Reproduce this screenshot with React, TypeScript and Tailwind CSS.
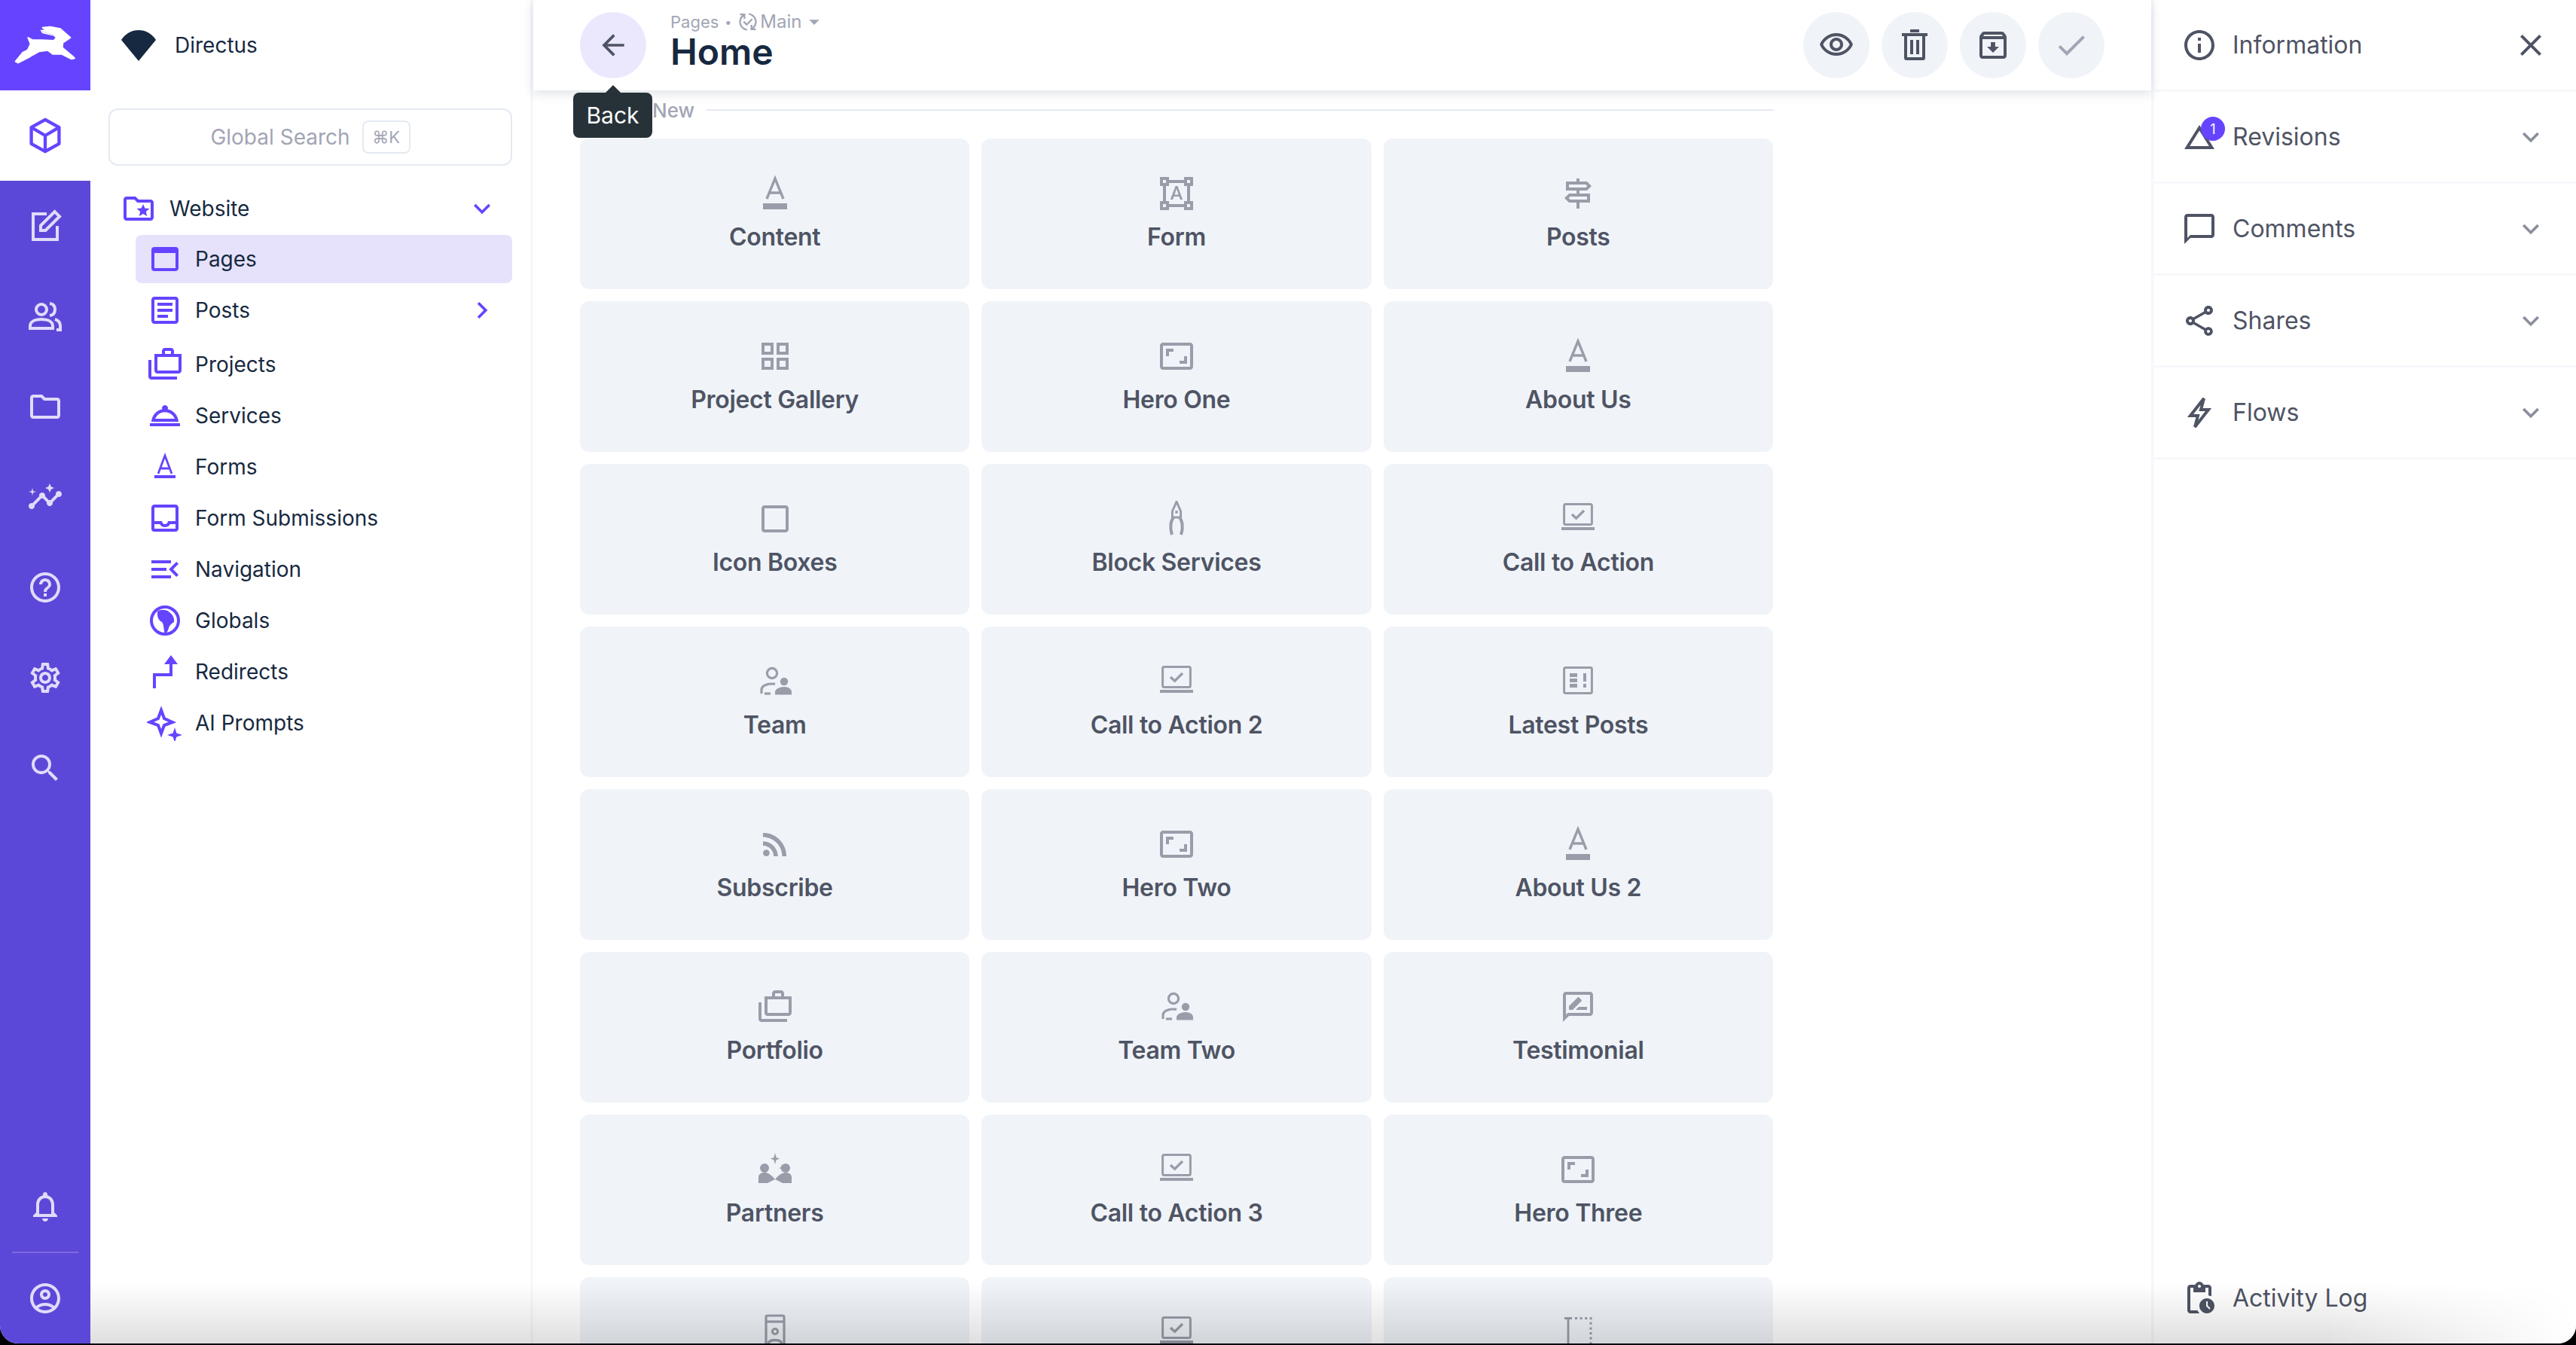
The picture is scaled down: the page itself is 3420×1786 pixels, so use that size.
import {
  MdArrowBack,
  MdArrowDropDown,
  MdCheck,
  MdClose,
  MdExpandMore,
  MdChevronRight,
  MdSearch,
  MdOutlineAccountCircle,
  MdOutlineArchive,
  MdOutlineArticle,
  MdOutlineAspectRatio,
  MdOutlineCases,
  MdOutlineChangeHistory,
  MdOutlineChatBubbleOutline,
  MdOutlineCheckBoxOutlineBlank,
  MdOutlineFolder,
  MdOutlineFolderSpecial,
  MdOutlineFormatShapes,
  MdOutlineGridView,
  MdOutlineHelpOutline,
  MdOutlineInbox,
  MdOutlineInfo,
  MdOutlineInsights,
  MdOutlineMenuOpen,
  MdOutlineNotifications,
  MdOutlinePendingActions,
  MdOutlinePublishedWithChanges,
  MdOutlineRateReview,
  MdOutlineRoomService,
  MdOutlineRssFeed,
  MdOutlineSettings,
  MdOutlineShare,
  MdOutlineSignpost,
  MdOutlineVisibility,
  MdOutlineWebAsset,
} from 'react-icons/md';
import type { ComponentType } from 'react';

type IconType = ComponentType<{ className?: string }>;
type IconProps = { className?: string };

const font = { fontFamily: 'Inter, "Liberation Sans", sans-serif' };

// Hand-drawn icons that the packages don't carry
const CubeIcon = ({ className }: IconProps) => (
  <svg viewBox="0 0 24 24" className={className} fill="none" stroke="currentColor" strokeWidth="2" strokeLinejoin="round">
    <path d="M12 2.200 20.500 7v10L12 21.800 3.500 17V7z" />
    <path d="M3.500 7 12 12l8.500-5M12 12v9.800" />
  </svg>
);

const EditSquareIcon = ({ className }: IconProps) => (
  <svg viewBox="0 0 24 24" className={className} fill="none" stroke="currentColor" strokeWidth="2">
    <path d="M13 4H4v17h16v-9" />
    <path d="M9 15v-3.200L18.300 2.500l3.200 3.200L12.200 15z" />
  </svg>
);

const GroupIcon = ({ className }: IconProps) => (
  <svg viewBox="0 0 24 24" className={className} fill="none" stroke="currentColor" strokeWidth="2">
    <circle cx="9.500" cy="7.500" r="3.500" />
    <path d="M2 20v-1.500c0-3 3.200-4.500 7.500-4.500s7.500 1.500 7.500 4.500V20z" />
    <path d="M15 3.500c2.700.300 3.500 2.300 3.500 4s-.800 3.700-3.500 4" />
    <path d="M18.500 14c2.300.700 3.500 2.200 3.500 4.500V21h-2.500" />
  </svg>
);

const RedirectIcon = ({ className }: IconProps) => (
  <svg viewBox="0 0 24 24" className={className} fill="none">
    <path d="M5 23v-9h11V5" stroke="currentColor" strokeWidth="2" />
    <path d="M11.500 7 16 1l4.500 6z" fill="currentColor" />
  </svg>
);

const SparkIcon = ({ className }: IconProps) => (
  <svg viewBox="0 0 24 24" className={className} fill="none">
    <path d="M9.500 3.500 11.500 9l5.500 2.500-5.500 2L9.500 19l-2-5.500L2 11.500 7.500 9z" stroke="currentColor" strokeWidth="2" />
    <path d="M18.500 15l1.200 3.800 3.800 1.200-3.800 1.200-1.200 3.800-1.200-3.800-3.800-1.200 3.800-1.200z" fill="currentColor" />
  </svg>
);

const GlobeIcon = ({ className }: IconProps) => (
  <svg viewBox="0 0 24 24" className={className} fill="none">
    <circle cx="12" cy="12" r="9" stroke="currentColor" strokeWidth="2" />
    <path d="M7 6c2-1.500 6-1.500 8 .500 2 1.500 3.500 4 3 6.500-1.500 1-3 2-3.500 4-.500 2-1.500 3.500-2.500 4-1-3-.500-6-2-8-2-1-3-3-3-5z" fill="currentColor" />
  </svg>
);

const NavTextIcon = ({ className }: IconProps) => (
  <svg viewBox="0 0 24 24" className={className} fill="none">
    <path d="M7.500 16.500 12 4.500l4.500 12M9 13h6" stroke="currentColor" strokeWidth="1.400" />
    <path d="M5 17.500h14v2H5z" fill="currentColor" />
  </svg>
);

const TextIcon = ({ className }: IconProps) => (
  <svg viewBox="0 0 24 24" className={className} fill="none">
    <path d="M6.500 15.500 12 2l5.500 13.500M8.300 11.500h7.400" stroke="currentColor" strokeWidth="1.700" />
    <path d="M4 18.500h16v4H4z" fill="currentColor" />
  </svg>
);

const LaptopCheckIcon = ({ className }: IconProps) => (
  <svg viewBox="0 0 24 24" className={className} fill="none">
    <rect x="2.800" y="2.300" width="18.400" height="13.500" rx="1" stroke="currentColor" strokeWidth="1.500" />
    <path d="m8 9 2.800 2.600L16 6.500" stroke="currentColor" strokeWidth="1.700" />
    <path d="M1 17.500h22v2H1z" fill="currentColor" />
  </svg>
);

const NewsIcon = ({ className }: IconProps) => (
  <svg viewBox="0 0 24 24" className={className} fill="none">
    <rect x="2.800" y="2.800" width="18.400" height="16.900" rx="1" stroke="currentColor" strokeWidth="1.500" />
    <path d="M6.500 6.500h5V9h-5zM6.500 10h5v2.500h-5zM6.500 13.500h5V16h-5zM15.500 6.500h2V12h-2zM15.500 13.500h2V16h-2z" fill="currentColor" />
  </svg>
);

const TeamIcon = ({ className }: IconProps) => (
  <svg viewBox="0 0 24 24" className={className} fill="none">
    <circle cx="10" cy="6.500" r="3.300" stroke="currentColor" strokeWidth="1.600" />
    <path d="M3 20v-2.500c0-2.500 3-4 7-4 .700 0 1.300 0 2 .200" stroke="currentColor" strokeWidth="1.600" />
    <path d="M9 20h-4" stroke="currentColor" strokeWidth="1.600" />
    <circle cx="18" cy="12" r="2.600" fill="currentColor" />
    <path d="M12 20.800v-1.800c0-2 3-3.500 6-3.500s5 1.500 5 3.500v1.800z" fill="currentColor" />
  </svg>
);

const CompassIcon = ({ className }: IconProps) => (
  <svg viewBox="0 0 24 24" className={className} fill="none">
    <path d="M12 .500 9.200 7v4h5.600V7z" stroke="currentColor" strokeWidth="1.500" />
    <circle cx="12" cy="7.500" r="1" fill="currentColor" />
    <path d="M10 11c-2 2.500-2.500 7-1 11.500M14 11c2 2.500 2.500 7 1 11.500" stroke="currentColor" strokeWidth="2" />
  </svg>
);

const PartnersIcon = ({ className }: IconProps) => (
  <svg viewBox="0 0 24 24" className={className} fill="currentColor">
    <path d="M12 1l.800 3 2.200.800-2.200.800L12 8.500l-.800-2.900L9 4.800l2.200-.800zM16.500 8.500l.500 2 1.500.500-1.500.500-.500 2-.500-2-1.500-.500 1.500-.500z" />
    <circle cx="5" cy="11" r="3" />
    <circle cx="19" cy="11" r="3" />
    <path d="M1 21v-4c0-2 2-3 4-3 2.500 0 5 2 7 4.500 2-2.500 4.500-4.500 7-4.500 2 0 4 1 4 3v4h-6l-5-2.500L7 21z" />
  </svg>
);

const TrashIcon = ({ className }: IconProps) => (
  <svg viewBox="0 0 24 24" className={className} fill="none" stroke="currentColor" strokeWidth="2">
    <path d="M6 5.500V20.500a.500.500 0 0 0 .500.500h11a.500.500 0 0 0 .500-.500V5.500" />
    <path d="M3.500 5h17M9 2.500h6M10 8.500V18M14 8.500V18" />
  </svg>
);

const BoltIcon = ({ className }: IconProps) => (
  <svg viewBox="0 0 24 24" className={className} fill="none" stroke="currentColor" strokeWidth="2">
    <path d="M15 2.500 6 14h5l-2 7.500L18 10h-5z" />
  </svg>
);

const PortraitIcon = ({ className }: IconProps) => (
  <svg viewBox="0 0 24 24" className={className} fill="none">
    <rect x="6" y="1" width="12" height="22" rx="1" stroke="currentColor" strokeWidth="1.600" />
    <path d="M6 5h12" stroke="currentColor" strokeWidth="1.600" />
    <circle cx="12" cy="11.500" r="1.800" stroke="currentColor" strokeWidth="1.500" />
    <path d="M7.500 19.500c1-3 8-3 9 0" stroke="currentColor" strokeWidth="1.800" />
  </svg>
);

const TextSelectIcon = ({ className }: IconProps) => (
  <svg viewBox="0 0 24 24" className={className} fill="none">
    <path d="M3 2h5v1.500H6.200v17H8V22H3v-1.500h1.800v-17H3z" fill="currentColor" />
    <path d="M10 2.700h10.500v18.600H10" stroke="currentColor" strokeWidth="1.500" strokeDasharray="1.500 1.800" />
  </svg>
);

const FanLogo = ({ className }: IconProps) => (
  <svg viewBox="0 0 48 44" className={className}>
    <path d="M24 43 1 15C7 6 15 2 24 2s17 4 23 13z" fill="#172940" />
  </svg>
);

const RabbitLogo = ({ className }: IconProps) => (
  <svg viewBox="0 -60 360 360" className={className}>
    <path
      d="M112 90 130 100 165 100 215 102 225 90 215 80 170 70 165 62 185 60 170 50 200 47 240 55 280 90 265 100 250 110 248 130 290 165 297 172 285 175 245 155 210 155 190 140 155 145 120 165 72 190 62 185 90 150 110 140 122 115z"
      fill="#fff"
      stroke="#fff"
      strokeWidth="6"
      strokeLinejoin="round"
    />
    <path d="M165 64 215 80" stroke="#d9d2ff" strokeWidth="3" fill="none" />
  </svg>
);

const moduleIcons: IconType[] = [
  EditSquareIcon,
  GroupIcon,
  MdOutlineFolder,
  MdOutlineInsights,
  MdOutlineHelpOutline,
  MdOutlineSettings,
  MdSearch,
];

const navItems: { label: string; icon: IconType; active?: boolean; more?: boolean }[] = [
  { label: 'Pages', icon: MdOutlineWebAsset, active: true },
  { label: 'Posts', icon: MdOutlineArticle, more: true },
  { label: 'Projects', icon: MdOutlineCases },
  { label: 'Services', icon: MdOutlineRoomService },
  { label: 'Forms', icon: NavTextIcon },
  { label: 'Form Submissions', icon: MdOutlineInbox },
  { label: 'Navigation', icon: MdOutlineMenuOpen },
  { label: 'Globals', icon: GlobeIcon },
  { label: 'Redirects', icon: RedirectIcon },
  { label: 'AI Prompts', icon: SparkIcon },
];

const blocks: { label: string; icon: IconType }[] = [
  { label: 'Content', icon: TextIcon },
  { label: 'Form', icon: MdOutlineFormatShapes },
  { label: 'Posts', icon: MdOutlineSignpost },
  { label: 'Project Gallery', icon: MdOutlineGridView },
  { label: 'Hero One', icon: MdOutlineAspectRatio },
  { label: 'About Us', icon: TextIcon },
  { label: 'Icon Boxes', icon: MdOutlineCheckBoxOutlineBlank },
  { label: 'Block Services', icon: CompassIcon },
  { label: 'Call to Action', icon: LaptopCheckIcon },
  { label: 'Team', icon: TeamIcon },
  { label: 'Call to Action 2', icon: LaptopCheckIcon },
  { label: 'Latest Posts', icon: NewsIcon },
  { label: 'Subscribe', icon: MdOutlineRssFeed },
  { label: 'Hero Two', icon: MdOutlineAspectRatio },
  { label: 'About Us 2', icon: TextIcon },
  { label: 'Portfolio', icon: MdOutlineCases },
  { label: 'Team Two', icon: TeamIcon },
  { label: 'Testimonial', icon: MdOutlineRateReview },
  { label: 'Partners', icon: PartnersIcon },
  { label: 'Call to Action 3', icon: LaptopCheckIcon },
  { label: 'Hero Three', icon: MdOutlineAspectRatio },
  { label: '', icon: PortraitIcon },
  { label: '', icon: LaptopCheckIcon },
  { label: '', icon: TextSelectIcon },
];

const sections: { label: string; icon: IconType; badge?: boolean }[] = [
  { label: 'Revisions', icon: MdOutlineChangeHistory, badge: true },
  { label: 'Comments', icon: MdOutlineChatBubbleOutline },
  { label: 'Shares', icon: MdOutlineShare },
  { label: 'Flows', icon: BoltIcon },
];

const ModuleBar = () => (
  <div className="flex h-full w-[120px] shrink-0 flex-col bg-[#5c48d8]">
    <div className="flex h-[120px] items-center justify-center bg-[#6644ff]">
      <RabbitLogo className="h-[120px] w-[120px]" />
    </div>
    <div className="flex h-[120px] items-center justify-center bg-white">
      <CubeIcon className="h-[52px] w-[52px] text-[#6644ff]" />
    </div>
    {moduleIcons.map((Icon, i) => (
      <div key={i} className="flex h-[120px] items-center justify-center text-[#e0dbfb]">
        <Icon className="h-[48px] w-[48px]" />
      </div>
    ))}
    <div className="mt-auto flex h-[120px] items-center justify-center text-[#e0dbfb]">
      <MdOutlineNotifications className="h-[48px] w-[48px]" />
    </div>
    <div className="mx-[16px] h-[2px] bg-[#7b6ae0]" />
    <div className="flex h-[120px] items-center justify-center text-[#e0dbfb]">
      <MdOutlineAccountCircle className="h-[48px] w-[48px]" />
    </div>
  </div>
);

const NavPanel = () => (
  <div className="flex h-full w-[588px] shrink-0 flex-col border-r-[4px] border-[#f6f8fb] bg-white">
    <div className="flex h-[120px] items-center pl-[40px] text-[28px] text-[#172940]">
      <FanLogo className="mr-[24px] h-[44px] w-[48px]" />
      Directus
    </div>
    <div className="mx-[24px] mt-[24px] flex h-[76px] items-center justify-center gap-[16px] rounded-[12px] border-2 border-[#e4eaf1] text-[28px] text-[#a2a5b5]">
      Global Search
      <span className="flex h-[44px] w-[64px] items-center justify-center rounded-[8px] border-2 border-[#e4eaf1] text-[22px]">⌘K</span>
    </div>
    <div className="mt-[23px] flex h-[68px] items-center pl-[40px] pr-[42px] text-[28px] text-[#172940]">
      <MdOutlineFolderSpecial className="mr-[17px] h-[48px] w-[48px] text-[#6644ff]" />
      Website
      <MdExpandMore className="ml-auto h-[44px] w-[44px] text-[#6644ff]" />
    </div>
    <div className="mt-[1px] ml-[60px] mr-[24px] flex flex-col gap-[4px]">
      {navItems.map(({ label, icon: Icon, active, more }) => (
        <div
          key={label}
          className={`flex h-[64px] items-center rounded-[8px] pl-[15px] pr-[18px] text-[28px] text-[#172940] ${active ? 'bg-[#e6e2fb]' : ''} ${more ? 'mb-[4px]' : ''}`}
        >
          <Icon className="mr-[16px] h-[48px] w-[48px] text-[#6644ff]" />
          {label}
          {more && <MdChevronRight className="ml-auto h-[44px] w-[44px] text-[#6644ff]" />}
        </div>
      ))}
    </div>
  </div>
);

const Header = () => (
  <div className="relative z-10 flex h-[120px] shrink-0 items-center bg-white pl-[62px] pr-[62px] shadow-[0_4px_14px_rgba(23,41,64,0.14)]">
    <div className="relative flex h-[88px] w-[88px] items-center justify-center rounded-full bg-[#ebe8fd] text-[#4f5464]">
      <MdArrowBack className="h-[44px] w-[44px]" />
      <div className="absolute top-[107px] left-[-9px] flex h-[60px] w-[105px] items-center justify-center rounded-[8px] bg-[#263238] text-[30px] text-white">
        <span className="absolute top-[-10px] left-[41px] h-0 w-0 border-x-[12px] border-b-[12px] border-x-transparent border-b-[#263238]" />
        Back
      </div>
    </div>
    <div className="mb-[10px] ml-[32px] flex flex-col">
      <div className="flex h-[28px] items-center text-[22px] text-[#a2a5b5]">
        Pages
        <span className="mx-[8px] text-[16px]">•</span>
        <MdOutlinePublishedWithChanges className="h-[28px] w-[28px]" />
        <span className="ml-[2px] text-[24px]">Main</span>
        <MdArrowDropDown className="h-[32px] w-[32px]" />
      </div>
      <div className="h-[52px] text-[48px] leading-[52px] font-semibold text-[#172940]">Home</div>
    </div>
    <div className="ml-auto flex gap-[16px]">
      {[MdOutlineVisibility, TrashIcon, MdOutlineArchive].map((Icon, i) => (
        <div key={i} className="flex h-[88px] w-[88px] items-center justify-center rounded-full bg-[#f0f4f9] text-[#4f5464]">
          <Icon className="h-[48px] w-[48px]" />
        </div>
      ))}
      <div className="flex h-[88px] w-[88px] items-center justify-center rounded-full bg-[#f0f4f9] text-[#a2a5b5]">
        <MdCheck className="h-[48px] w-[48px]" />
      </div>
    </div>
  </div>
);

const BlockGrid = () => (
  <div className="flex min-h-0 flex-1 flex-col overflow-hidden pl-[62px]">
    <div className="flex h-[52px] w-[1584px] shrink-0 items-center pl-[96px]">
      <span className="mr-[16px] text-[26px] font-medium text-[#a2a5b5]">New</span>
      <div className="h-[2px] flex-1 bg-[#e4eaf1]" />
    </div>
    <div className="mt-[12px] grid w-[1584px] grid-cols-3 gap-[16px]">
      {blocks.map(({ label, icon: Icon }, i) => (
        <div key={i} className="flex h-[200px] shrink-0 flex-col items-center justify-center rounded-[12px] bg-[#f0f4f9] pt-[2px]">
          <Icon className="h-[48px] w-[48px] text-[#9a9da9]" />
          <span className="mt-[12px] h-[44px] text-[32px] leading-[44px] font-semibold tracking-[-0.3px] text-[#4f5464]">{label}</span>
        </div>
      ))}
    </div>
  </div>
);

const SidePanel = () => (
  <div className="flex h-full w-[564px] shrink-0 flex-col border-l-[4px] border-[#f6f8fb] bg-white text-[#4f5464]">
    <div className="flex h-[122px] items-center border-b-[3px] border-[#f6f8fb] pl-[36px] pr-[36px] text-[32px]">
      <MdOutlineInfo className="mr-[20px] h-[48px] w-[48px]" />
      Information
      <MdClose className="ml-auto h-[48px] w-[48px]" />
    </div>
    {sections.map(({ label, icon: Icon, badge }) => (
      <div key={label} className="relative flex h-[122px] items-center border-b-[3px] border-[#f6f8fb] pl-[36px] pr-[38px] text-[32px]">
        <Icon className="mr-[20px] h-[48px] w-[48px]" />
        {label}
        {badge && (
          <span className="absolute top-[33px] left-[62px] flex h-[32px] w-[32px] items-center justify-center rounded-full bg-[#6644ff] text-[18px] text-white">1</span>
        )}
        <MdExpandMore className="ml-auto h-[44px] w-[44px] text-[#8b8e9b]" />
      </div>
    ))}
    <div className="mt-auto flex h-[120px] items-center pl-[36px] text-[32px]">
      <MdOutlinePendingActions className="mr-[20px] h-[48px] w-[48px]" />
      Activity Log
    </div>
  </div>
);

export default function App() {
  return (
    <div className="h-[1786px] w-[3420px] overflow-hidden bg-black" style={font}>
      <div className="relative flex h-[1784px] overflow-hidden rounded-b-[24px] bg-white">
        <ModuleBar />
        <NavPanel />
        <div className="flex h-full min-w-0 flex-1 flex-col">
          <Header />
          <BlockGrid />
        </div>
        <SidePanel />
        {/* Bottom window shade */}
        <div className="pointer-events-none absolute right-0 bottom-0 left-[120px] z-20 h-[80px] bg-gradient-to-t from-[#00000020] to-transparent [mask-image:linear-gradient(to_right,black_90%,transparent)]" />
      </div>
    </div>
  );
}
